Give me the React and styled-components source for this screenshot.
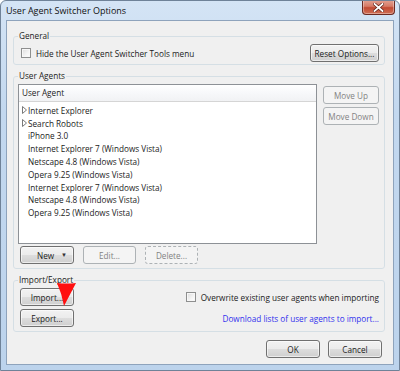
import styled, { createGlobalStyle } from "styled-components";

const Global = createGlobalStyle`
  html, body {
    margin: 0;
    padding: 0;
    background: #ffffff;
  }
  * {
    box-sizing: border-box;
  }
`;

const Window = styled.div`
  position: relative;
  display: flex;
  flex-direction: column;
  width: 400px;
  height: 371px;
  border: 1px solid #6f8298;
  border-radius: 6px 6px 0 0;
  background: linear-gradient(180deg, #d4e4f5 0%, #c3d8ef 30%, #bcd3ec 100%);
  font-family: "Open Sans", "Noto Sans", sans-serif;
  font-size: 8.2px;
  color: #1b1b1b;
  overflow: hidden;
`;

const TitleBar = styled.div`
  display: flex;
  justify-content: space-between;
  align-items: flex-start;
  height: 19px;
  padding-left: 5px;
`;

const Title = styled.div`
  line-height: 20px;
  font-size: 9px;
  color: #101010;
`;

const Close = styled.div`
  display: flex;
  align-items: center;
  justify-content: center;
  width: 33px;
  height: 15px;
  margin-right: 4px;
  margin-top: -1px;
  border: 1px solid #6b2a22;
  border-top: none;
  border-radius: 0 0 4px 4px;
  background: linear-gradient(180deg, #e3a394 0%, #d67a66 45%, #c24a33 55%, #cf6f55 100%);
  box-shadow: inset 0 0 0 1px rgba(255, 255, 255, 0.35);
`;

const Client = styled.div`
  flex: 1;
  display: flex;
  flex-direction: column;
  margin: 0 5px 5px 5px;
  padding: 0 8px 0 6px;
  border: 1px solid #8ea3bc;
  background: #f0f0f0;
`;

const Group = styled.fieldset`
  margin: ${(p) => p.$top}px 0 0 0;
  padding: 0;
  min-width: 0;
  border: 1px solid #d5dfe5;
  border-radius: 3px;
`;

const Legend = styled.legend`
  margin-left: 4px;
  padding: 0 1px;
  line-height: 14px;
  color: #1b1b1b;
`;

const GeneralBody = styled.div`
  display: flex;
  justify-content: space-between;
  align-items: center;
  padding: 1px 5px 2px 7px;
`;

const CheckLabel = styled.label`
  display: flex;
  align-items: center;
  gap: 5px;
  white-space: nowrap;
`;

const Box = styled.span`
  display: inline-block;
  width: 10px;
  height: 10px;
  border: 1px solid #8e8f8f;
  background: linear-gradient(135deg, #dcdcdc 0%, #f4f4f4 60%, #ffffff 100%);
  box-shadow: inset 0 0 0 1px #f7f7f7;
`;

const Button = styled.div`
  display: flex;
  align-items: center;
  justify-content: ${(p) => (p.$split ? "space-between" : "center")};
  width: ${(p) => p.$w}px;
  height: 18px;
  padding: ${(p) => (p.$split ? "0 6px 0 16px" : "0")};
  border: 1px ${(p) => (p.$dashed ? "dashed" : "solid")}
    ${(p) => (p.$disabled ? "#adb2b5" : "#707070")};
  border-radius: 3px;
  background: ${(p) =>
    p.$disabled
      ? "#f4f4f4"
      : "linear-gradient(180deg, #f2f2f2 0%, #ebebeb 50%, #dddddd 51%, #cfcfcf 100%)"};
  color: ${(p) => (p.$disabled ? "#838383" : "#1b1b1b")};
  white-space: nowrap;
  box-shadow: ${(p) => (p.$disabled ? "none" : "inset 0 0 0 1px rgba(255,255,255,0.6)")};
`;

const Caret = styled.span`
  font-size: 6px;
  color: #333;
`;

const AgentsBody = styled.div`
  display: grid;
  grid-template-columns: 299px 1fr;
  grid-template-rows: 160px auto;
  column-gap: 6px;
  row-gap: 2px;
  padding: 1px 5px 4px 4px;
`;

const List = styled.div`
  display: flex;
  flex-direction: column;
  border: 1px solid #8d9196;
  background: #ffffff;
`;

const Header = styled.div`
  height: 17px;
  line-height: 16px;
  padding-left: 3px;
  border-bottom: 1px solid #d5d5d5;
  background: linear-gradient(180deg, #ffffff 0%, #f7f8fa 50%, #f1f2f4 100%);
`;

const Rows = styled.div`
  padding-top: 2px;
`;

const Row = styled.div`
  display: flex;
  align-items: center;
  height: 12.8px;
  padding-left: 3px;
  white-space: nowrap;
`;

const Twisty = styled.span`
  display: inline-flex;
  width: 6px;
`;

const Side = styled.div`
  display: flex;
  flex-direction: column;
  gap: 3px;
  padding-top: 2px;
`;

const ActionRow = styled.div`
  display: flex;
  gap: 9px;
  padding-left: 2px;
`;

const ImportBody = styled.div`
  display: grid;
  grid-template-columns: auto 1fr;
  row-gap: 3px;
  align-items: center;
  padding: 1px 5px 4px 6px;
`;

const Right = styled.div`
  display: flex;
  justify-content: flex-end;
`;

const Link = styled.span`
  color: #3232ee;
  white-space: nowrap;
`;

const Footer = styled.div`
  display: flex;
  justify-content: flex-end;
  gap: 8px;
  margin-top: 8px;
  padding-right: 3px;
`;

const Pointer = styled.svg`
  position: absolute;
  left: 54px;
  top: 279px;
`;

const agents = [
  { name: "Internet Explorer", folder: true },
  { name: "Search Robots", folder: true },
  { name: "iPhone 3.0" },
  { name: "Internet Explorer 7 (Windows Vista)" },
  { name: "Netscape 4.8 (Windows Vista)" },
  { name: "Opera 9.25 (Windows Vista)" },
  { name: "Internet Explorer 7 (Windows Vista)" },
  { name: "Netscape 4.8 (Windows Vista)" },
  { name: "Opera 9.25 (Windows Vista)" },
];

export default function App() {
  return (
    <>
      <Global />
      <Window>
        <TitleBar>
          <Title>User Agent Switcher Options</Title>
          <Close>
            <svg width="11" height="9" viewBox="0 0 11 9">
              <path
                d="M1.5 1 L9.5 8 M9.5 1 L1.5 8"
                stroke="#5a1e15"
                strokeWidth="3.2"
                strokeLinecap="square"
              />
              <path
                d="M1.5 1 L9.5 8 M9.5 1 L1.5 8"
                stroke="#ffffff"
                strokeWidth="1.8"
                strokeLinecap="square"
              />
            </svg>
          </Close>
        </TitleBar>
        <Client>
          <Group $top={8}>
            <Legend>General</Legend>
            <GeneralBody>
              <CheckLabel>
                <Box />
                Hide the User Agent Switcher Tools menu
              </CheckLabel>
              <Button $w={69}>Reset Options...</Button>
            </GeneralBody>
          </Group>

          <Group $top={4}>
            <Legend>User Agents</Legend>
            <AgentsBody>
              <List>
                <Header>User Agent</Header>
                <Rows>
                  {agents.map((a, i) => (
                    <Row key={i}>
                      <Twisty>
                        {a.folder && (
                          <svg width="5" height="8" viewBox="0 0 5 8">
                            <path d="M0.5 0.5 L4.5 4 L0.5 7.5 Z" fill="none" stroke="#7a7a7a" strokeWidth="1" />
                          </svg>
                        )}
                      </Twisty>
                      {a.name}
                    </Row>
                  ))}
                </Rows>
              </List>
              <Side>
                <Button $w={56} $disabled>Move Up</Button>
                <Button $w={56} $disabled>Move Down</Button>
              </Side>
              <ActionRow>
                <Button $w={54} $split>
                  New <Caret>▼</Caret>
                </Button>
                <Button $w={53} $disabled>Edit...</Button>
                <Button $w={53} $disabled $dashed>Delete...</Button>
              </ActionRow>
            </AgentsBody>
          </Group>

          <Group $top={4}>
            <Legend>Import/Export</Legend>
            <ImportBody>
              <Button $w={54}>Import...</Button>
              <Right>
                <CheckLabel>
                  <Box />
                  Overwrite existing user agents when importing
                </CheckLabel>
              </Right>
              <Button $w={54}>Export...</Button>
              <Right>
                <Link>Download lists of user agents to import...</Link>
              </Right>
            </ImportBody>
          </Group>

          <Footer>
            <Button $w={54}>OK</Button>
            <Button $w={54}>Cancel</Button>
          </Footer>
        </Client>
        <Pointer width="24" height="28" viewBox="0 0 24 28">
          <path d="M2 3 Q12 4 21 3 L9 26 Q7 14 2 3 Z" fill="#ff1010" />
        </Pointer>
      </Window>
    </>
  );
}
